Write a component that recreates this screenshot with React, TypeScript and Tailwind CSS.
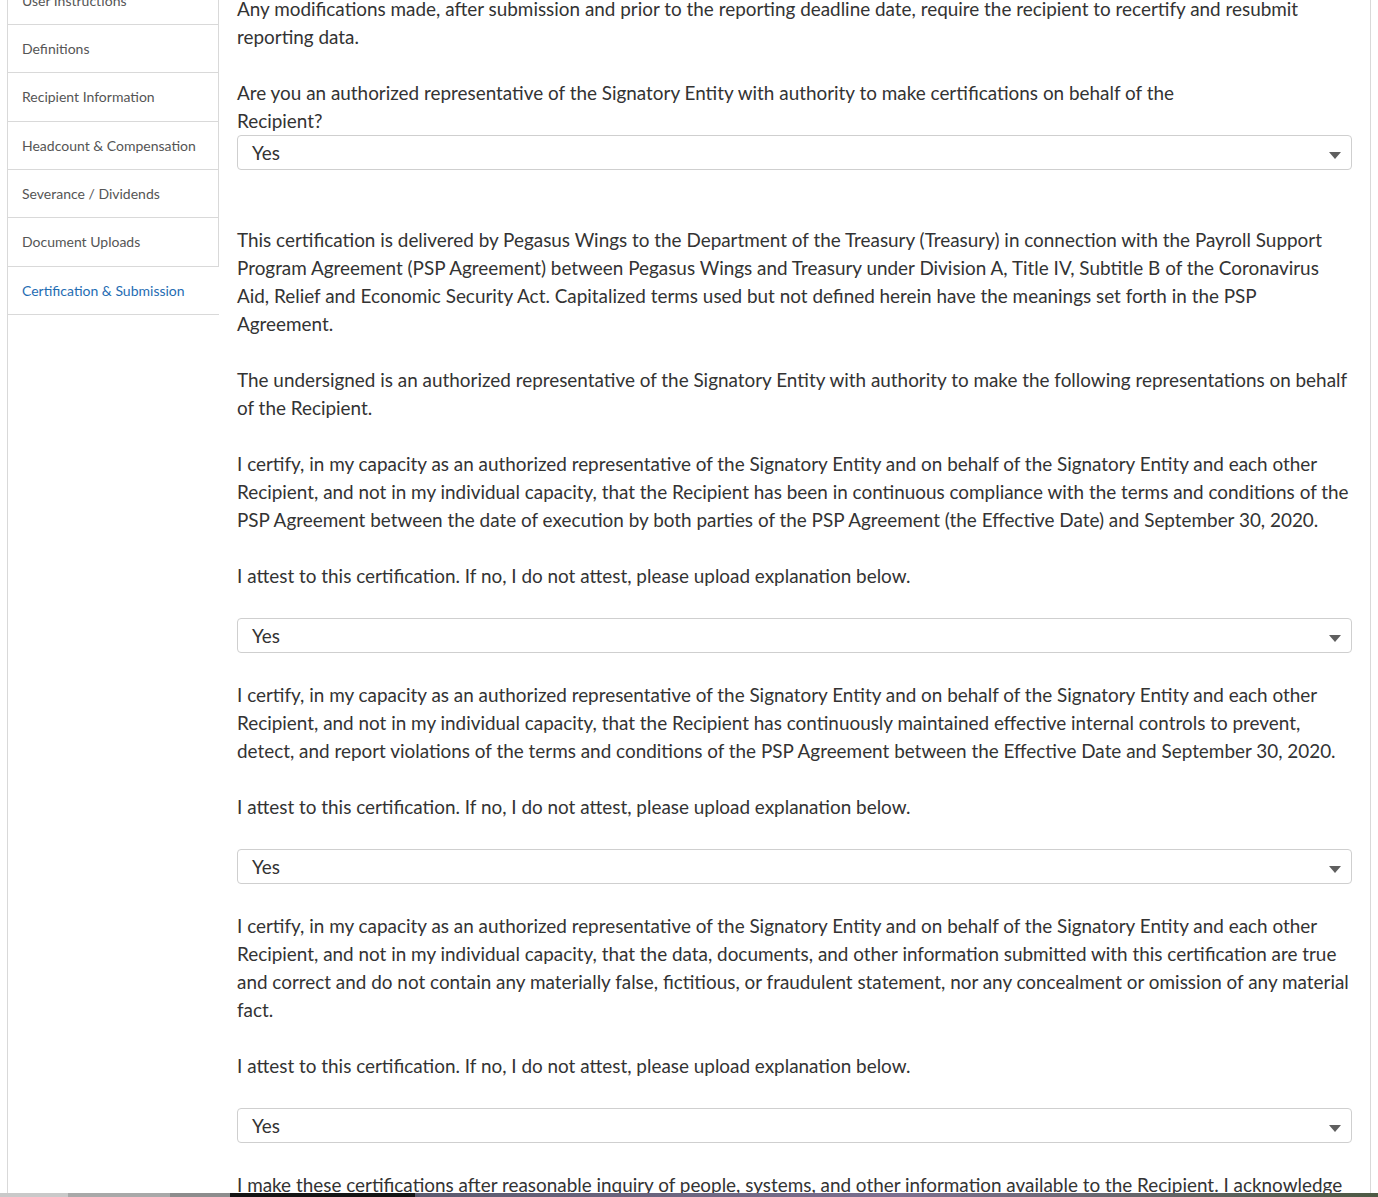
const navItems = [
  "User Instructions",
  "Definitions",
  "Recipient Information",
  "Headcount & Compensation",
  "Severance / Dividends",
  "Document Uploads",
  "Certification & Submission",
];

const certifyIntro =
  "I certify, in my capacity as an authorized representative of the Signatory Entity and on behalf of the Signatory Entity and each other Recipient, and not in my individual capacity, that ";

const attest = "I attest to this certification. If no, I do not attest, please upload explanation below.";

function YesSelect({ className = "" }: { className?: string }) {
  return (
    <div
      className={`flex items-center justify-between h-[35px] border border-[#cfcfcf] rounded-[4px] bg-white pl-[14px] pr-[10px] ${className}`}
    >
      <span className="text-[18.9px] text-[#333]">Yes</span>
      <svg width="12" height="7" viewBox="0 0 12 7" className="mt-[6px]">
        <path d="M0 0 L12 0 L6 7 Z" fill="#5f5f5f" />
      </svg>
    </div>
  );
}

export default function App() {
  return (
    <div className="h-[1197px] w-[1378px] overflow-hidden bg-white flex flex-col" style={{ fontFamily: "Lato, 'Open Sans', sans-serif" }}>
      <div className="h-[1193px] overflow-hidden">
        <div className="ml-[7px] w-[1364px] h-full border-l border-r border-[#d9d9d9] flex">
          {/* Sidebar */}
          <nav className="w-[211px] shrink-0 mt-[-23.33px]">
            {navItems.map((item, i) => {
              const active = i === navItems.length - 1;
              return (
                <div
                  key={item}
                  className={`h-[48.33px] flex items-center pl-[14px] border-b border-[#d9d9d9] text-[14px] ${
                    active ? "text-[#1f6db3]" : "text-[#555] border-r"
                  }`}
                >
                  {item}
                </div>
              );
            })}
          </nav>

          {/* Main content */}
          <main className="flex-1 pl-[18px] pr-[16px] mt-[-5px] text-[18.9px] leading-[28px] text-[#333]">
            <p className="mb-[28px]">
              Any modifications made, after submission and prior to the reporting deadline date, require the recipient to
              recertify and resubmit reporting data.
            </p>
            <p>
              Are you an authorized representative of the Signatory Entity with authority to make certifications on behalf of the
              <br />
              Recipient?
            </p>
            <YesSelect className="mb-[56px] mr-[2px]" />

            <p className="mb-[28px]">
              This certification is delivered by Pegasus Wings to the Department of the Treasury (Treasury) in connection with the
              Payroll Support Program Agreement (PSP Agreement) between Pegasus Wings and Treasury under Division A, Title IV,
              Subtitle B of the Coronavirus Aid, Relief and Economic Security Act. Capitalized terms used but not defined herein
              have the meanings set forth in the PSP Agreement.
            </p>
            <p className="mb-[28px]">
              The undersigned is an authorized representative of the Signatory Entity with authority to make the following
              representations on behalf of the Recipient.
            </p>
            <p className="mb-[28px]">
              {certifyIntro}the Recipient has been in continuous compliance with the terms and conditions of the PSP Agreement
              between the date of execution by both parties of the PSP Agreement (the Effective Date) and September 30, 2020.
            </p>
            <p className="mb-[28px]">{attest}</p>
            <YesSelect className="mb-[28px] mr-[2px]" />

            <p className="mb-[28px]">
              {certifyIntro}the Recipient has continuously maintained effective internal controls to prevent, detect, and report
              violations of the terms and conditions of the PSP Agreement between the Effective Date and September 30, 2020.
            </p>
            <p className="mb-[28px]">{attest}</p>
            <YesSelect className="mb-[28px] mr-[2px]" />

            <p className="mb-[28px]">
              {certifyIntro}the data, documents, and other information submitted with this certification are true and correct and
              do not contain any materially false, fictitious, or fraudulent statement, nor any concealment or omission of any
              material fact.
            </p>
            <p className="mb-[28px]">{attest}</p>
            <YesSelect className="mb-[28px] mr-[2px]" />

            <p className="mb-[28px]">
              I make these certifications after reasonable inquiry of people, systems, and other information available to the
              Recipient. I acknowledge that any false statement or misrepresentation may result in sanctions.
            </p>
          </main>
        </div>
      </div>

      {/* taskbar strip at screen bottom */}
      <div className="h-[4px] flex">
        <div className="w-[68px] bg-[#c9c9c9]" />
        <div className="w-[102px] bg-[#a9a9a9]" />
        <div className="w-[60px] bg-[#8d8d8d]" />
        <div className="w-[185px] bg-[#141414]" />
        <div className="flex-1 bg-gradient-to-r from-[#5a5a6e] via-[#7b6f8f] to-[#4d5a44]" />
      </div>
    </div>
  );
}
